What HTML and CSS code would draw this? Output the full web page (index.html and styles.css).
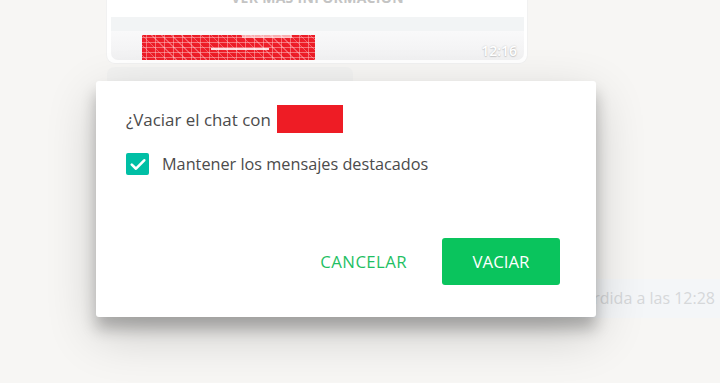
FILE: index.html
```html
<!DOCTYPE html>
<html lang="es">
<head>
<meta charset="utf-8">
<title>Vaciar chat</title>
<link rel="stylesheet" href="styles.css">
</head>
<body>
<div class="chat">
  <div class="card">
    <div class="card-more">VER MÁS INFORMACIÓN</div>
    <div class="card-bar"></div>
    <div class="card-foot">
      <div class="redact"><span class="redact-line"></span></div>
      <span class="card-time">12:16</span>
    </div>
  </div>
  <div class="bubble-in"></div>
  <div class="bubble-out">Llamada perdida a las 12:28</div>
</div>

<div class="modal">
  <div class="dialog">
    <div class="title">¿Vaciar el chat con <span class="name-redact"></span></div>
    <label class="check-row">
      <span class="checkbox">
        <svg width="16" height="13" viewBox="0 0 16 13"><path d="M1.8 6.6l4.2 4.1 8.2-8.4" fill="none" stroke="#fff" stroke-width="2.6" stroke-linecap="round" stroke-linejoin="round"/></svg>
      </span>
      <span class="check-label">Mantener los mensajes destacados</span>
    </label>
    <div class="actions">
      <button class="btn-cancel">CANCELAR</button>
      <button class="btn-ok">VACIAR</button>
    </div>
  </div>
</div>
</body>
</html>
```
FILE: styles.css
```css
* { box-sizing: border-box; }
html, body { height: 100%; }
body {
  margin: 0;
  background: #f7f6f4;
  font-family: "Open Sans", "Noto Sans", sans-serif;
  overflow: hidden;
  position: relative;
}
.chat {
  display: flex;
  flex-direction: column;
  padding-left: 107px;
}
.card {
  width: 420px;
  margin-top: -24px;
  background: #fff;
  border-radius: 8px;
  padding: 0 3px 3px 4px;
  box-shadow: 0 0 0 1px #f1f1f1;
}
.card-more {
  height: 41px;
  padding-top: 12px;
  text-align: center;
  font-size: 14px;
  font-weight: 700;
  color: #c4c4c4;
  letter-spacing: 0.3px;
}
.card-bar {
  height: 14px;
  background: #f2f4f5;
}
.card-foot {
  height: 29px;
  background: linear-gradient(#f9f9fa, #f1f1f2);
  border-radius: 0 0 7px 7px;
  display: flex;
  align-items: flex-start;
  padding-left: 31px;
  padding-right: 7px;
  padding-top: 4px;
}
.redact {
  width: 173px;
  height: 25px;
  display: flex;
  align-items: center;
  padding-left: 69px;
  background:
    linear-gradient(90deg, rgba(255,255,255,0) 0 100px, rgba(255,235,235,0.7) 100px 150px, rgba(255,255,255,0) 150px) top / 100% 3px no-repeat,
    repeating-linear-gradient(0deg, rgba(255,255,255,0) 0 2px, rgba(255,200,200,0.5) 2px 3px, rgba(255,255,255,0) 3px 5px),
    repeating-linear-gradient(90deg, rgba(255,255,255,0) 0 4px, rgba(255,210,210,0.45) 4px 5px, rgba(255,255,255,0) 5px 9px),
    repeating-linear-gradient(45deg, #ef1f2a 0 3px, #f5606a 3px 4px, #ec1c26 4px 7px);
}
.redact-line {
  width: 58px;
  height: 2px;
  background: rgba(255,255,255,0.85);
  margin-top: 3px;
}
.card-time {
  margin-left: auto;
  margin-top: 6px;
  font-size: 14px;
  font-weight: 600;
  color: #fff;
  text-shadow: 0 0 2px rgba(0,0,0,0.2), 0 1px 1px rgba(0,0,0,0.12);
}
.bubble-in {
  width: 246px;
  height: 40px;
  margin-top: 4px;
  background: #f2f2f1;
  border-radius: 7px;
}
.bubble-out {
  align-self: flex-end;
  margin-top: 172px;
  width: 300px;
  height: 39px;
  background: #f4f6f8;
  border-radius: 7px 0 0 7px;
  color: #d6d8da;
  font-size: 16px;
  line-height: 39px;
  padding-right: 5px;
  text-align: right;
  white-space: nowrap;
}
.modal {
  position: absolute;
  left: 96px;
  top: 81px;
}
.dialog {
  width: 500px;
  height: 236px;
  background: #fff;
  border-radius: 3px;
  box-shadow: 0 17px 50px 0 rgba(0,0,0,0.19), 0 12px 15px 0 rgba(0,0,0,0.24);
  padding: 24px 36px 0 30px;
  display: flex;
  flex-direction: column;
}
.title {
  display: flex;
  align-items: center;
  font-size: 16.9px;
  color: #4b4b4b;
  height: 28px;
}
.name-redact {
  display: inline-block;
  width: 66px;
  height: 28px;
  background: #ee1c25;
  margin-left: 6px;
}
.check-row {
  display: flex;
  align-items: center;
  margin-top: 20px;
  gap: 13px;
}
.checkbox {
  width: 23px;
  height: 22px;
  border-radius: 2px;
  background: #00bfa5;
  display: flex;
  align-items: center;
  justify-content: center;
}
.check-label {
  font-size: 16.25px;
  color: #4b4b4b;
}
.actions {
  display: flex;
  justify-content: flex-end;
  align-items: center;
  margin-top: 63px;
  gap: 35px;
}
.btn-cancel, .btn-ok {
  font-family: inherit;
  border: 0;
  font-size: 16.8px;
  cursor: pointer;
}
.btn-cancel {
  background: none;
  color: #1fbf63;
  padding: 0;
  letter-spacing: 0.4px;
}
.btn-ok {
  width: 118px;
  height: 47px;
  background: #0ac45d;
  color: #fff;
  border-radius: 3px;
  padding: 0;
}
```
